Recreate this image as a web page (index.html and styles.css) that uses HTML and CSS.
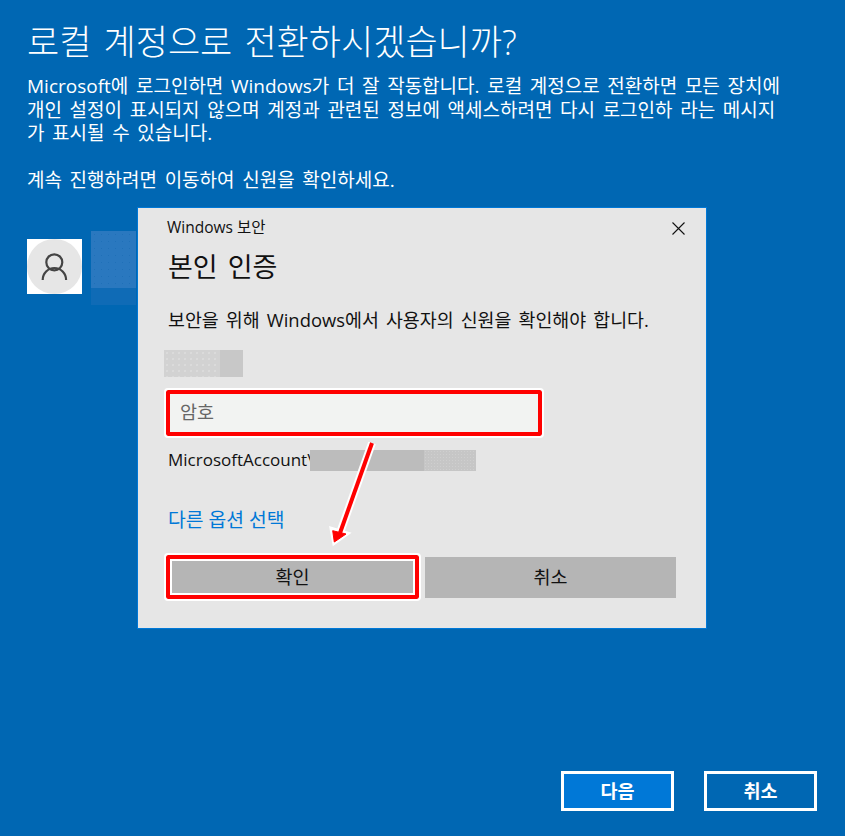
FILE: index.html
```html
<!DOCTYPE html>
<html lang="ko">
<head>
<meta charset="utf-8">
<title>로컬 계정으로 전환</title>
<link rel="stylesheet" href="styles.css">
</head>
<body>
<main class="page">
  <h1 class="title">로컬 계정으로 전환하시겠습니까?</h1>
  <p class="para">Microsoft에 로그인하면 Windows가 더 잘 작동합니다. 로컬 계정으로 전환하면 모든 장치에<br>개인 설정이 표시되지 않으며 계정과 관련된 정보에 액세스하려면 다시 로그인하 라는 메시지<br>가 표시될 수 있습니다.</p>
  <p class="para para-next">계속 진행하려면 이동하여 신원을 확인하세요.</p>
  <div class="user">
    <div class="avatar">
      <svg class="avatar-icon" viewBox="0 0 55 55" width="55" height="55">
        <circle cx="27.500" cy="27.500" r="27.500" fill="#e6e6e6"/>
        <circle cx="27.300" cy="23.300" r="8" fill="none" stroke="#444" stroke-width="2.200"/>
        <path d="M15.700 41a11.700 12 0 0 1 23.400 0" fill="none" stroke="#444" stroke-width="2.200"/>
      </svg>
    </div>
    <div class="user-mask"><div class="user-mask-top"></div></div>
  </div>
  <footer class="footer">
    <button class="wbtn wbtn-primary">다음</button>
    <button class="wbtn">취소</button>
  </footer>
</main>

<section class="dialog">
  <div class="dlg-head">
    <span class="dlg-app">Windows 보안</span>
    <svg class="dlg-close" viewBox="0 0 13 13" width="13" height="13"><path d="M.5.500l12 12M12.500.500l-12 12" stroke="#111" stroke-width="1.100" fill="none"/></svg>
  </div>
  <h2 class="dlg-title">본인 인증</h2>
  <p class="dlg-text">보안을 위해 Windows에서 사용자의 신원을 확인해야 합니다.</p>
  <div class="mask-name"><span class="mask-name-end"></span></div>
  <div class="input-mark"><div class="input">암호</div></div>
  <div class="account"><span>MicrosoftAccount\</span><span class="mask-account"><span class="mask-account-end"></span></span></div>
  <a class="link">다른 옵션 선택</a>
  <div class="dlg-actions">
    <div class="ok-mark"><button class="dbtn dbtn-ok">확인</button></div>
    <button class="dbtn dbtn-cancel">취소</button>
  </div>
</section>

<svg class="arrow" viewBox="0 0 60 115" width="60" height="115">
  <path d="M47 5 16 92" stroke="#fff" stroke-width="8" fill="none"/>
  <path d="M8.300 107 5 89 25 95Z" fill="#fff" stroke="#fff" stroke-width="1.500"/>
  <path d="M47 5 15 95" stroke="#f00" stroke-width="4" fill="none"/>
  <path d="M9.300 104 7.700 92.700 21 96Z" fill="#f00" stroke="#f00" stroke-width="1"/>
</svg>
</body>
</html>
```
FILE: styles.css
```css
* { box-sizing: border-box; }
html, body { margin: 0; padding: 0; }
body {
  width: 845px;
  height: 836px;
  overflow: hidden;
  background: #0067b3;
  position: relative;
  font-family: "Open Sans", "Noto Sans CJK KR", sans-serif;
}
.page {
  height: 836px;
  padding: 16px 28px 25px 27px;
  display: flex;
  flex-direction: column;
  color: #fff;
}
.title {
  margin: 0 0 7px;
  font-size: 35px;
  line-height: 52px;
  font-weight: 300;
  word-spacing: 3px;
}
.para {
  margin: 0;
  font-size: 19px;
  line-height: 23.5px;
  font-weight: 400;
  word-spacing: 2.700px;
  white-space: nowrap;
}
.para-next { margin-top: 23px; }
.user {
  margin-top: 39px;
  display: flex;
  align-items: flex-start;
  gap: 9px;
}
.avatar {
  width: 55px;
  height: 55px;
  margin-top: 8px;
  background: #fff;
}
.avatar-icon { display: block; }
.user-mask {
  width: 45px;
  height: 74px;
  background: #0f6bb6;
}
.user-mask-top {
  height: 57px;
  background-color: #2a78bf;
  background-image: radial-gradient(circle, #1f70b8 0.6px, transparent 1px);
  background-size: 7px 7px;
}
.footer {
  margin-top: auto;
  display: flex;
  justify-content: flex-end;
  gap: 30px;
}
.wbtn {
  width: 113px;
  height: 40px;
  border: 3px solid #fff;
  background: transparent;
  color: #fff;
  font: 700 18.5px "Open Sans", "Noto Sans CJK KR", sans-serif;
  padding: 0 0 2px;
}
.wbtn-primary { background: #0078d7; }

.dialog {
  position: absolute;
  left: 137px;
  top: 207px;
  width: 570px;
  height: 422px;
  background: #e6e6e6;
  border: 1px solid #0078d7;
  padding: 8px 30px 0 30px;
  color: #111;
  display: flex;
  flex-direction: column;
  align-items: flex-start;
}
.dlg-head {
  width: 100%;
  height: 23px;
  margin-left: -1px;
  display: flex;
  justify-content: space-between;
  align-items: center;
}
.dlg-app { font-size: 15.5px; line-height: 23px; }
.dlg-close { margin-top: 1px; margin-right: -10px; }
.dlg-title {
  margin: 10px 0 0;
  font-size: 27px;
  line-height: 36px;
  font-weight: 400;
  word-spacing: 3px;
}
.dlg-text {
  margin: 23px 0 0;
  font-size: 18.4px;
  line-height: 24px;
  word-spacing: 2.300px;
  white-space: nowrap;
}
.mask-name {
  width: 79px;
  height: 27px;
  margin: 18px 0 0 -4px;
  display: flex;
  justify-content: flex-end;
  background-color: #d2d2d2;
  background-image: radial-gradient(circle, #dedede 0.6px, transparent 1px);
  background-size: 6px 6px;
}
.mask-name-end { width: 23px; background: #c8c8c8; }
.input-mark {
  width: 376px;
  height: 46px;
  margin: 13px 0 0 -2px;
  padding: 4px;
  background: #f00;
  outline: 2px solid #fff;
  border-radius: 2px;
}
.input {
  height: 38px;
  background: #f2f3f2;
  padding-left: 10px;
  font-size: 18.500px;
  line-height: 35px;
  color: #666;
}
.account {
  margin-top: 12px;
  height: 24px;
  font-size: 17px;
  line-height: 24px;
  display: flex;
  align-items: center;
}
.mask-account {
  display: flex;
  justify-content: flex-end;
  width: 166px;
  height: 21px;
  margin-left: -3px;
  background: #bcbcbc;
}
.mask-account-end {
  width: 52px;
  background-color: #c6c6c6;
  background-image: radial-gradient(circle, #cfcfcf 0.5px, transparent 1px);
  background-size: 3px 3px;
}
.link {
  margin-top: 36px;
  font-size: 19.300px;
  line-height: 24px;
  color: #0078d7;
}
.dlg-actions {
  margin-top: 23px;
  width: 100%;
  display: flex;
  align-items: flex-start;
  gap: 6px;
}
.ok-mark {
  margin-left: -2px;
  width: 253px;
  height: 44px;
  padding: 4px;
  background: #f00;
  outline: 2px solid #fff;
  border-radius: 2px;
}
.dbtn {
  display: block;
  border: 0;
  padding: 0 0 3px;
  background: #b5b5b5;
  color: #111;
  font: 400 18.5px "Open Sans", "Noto Sans CJK KR", sans-serif;
}
.dbtn-ok {
  width: 100%;
  height: 100%;
  border: 2px solid #fff;
}
.dbtn-cancel { width: 251px; height: 41px; margin-top: 2px; }
.arrow {
  position: absolute;
  left: 325px;
  top: 438px;
}
```
